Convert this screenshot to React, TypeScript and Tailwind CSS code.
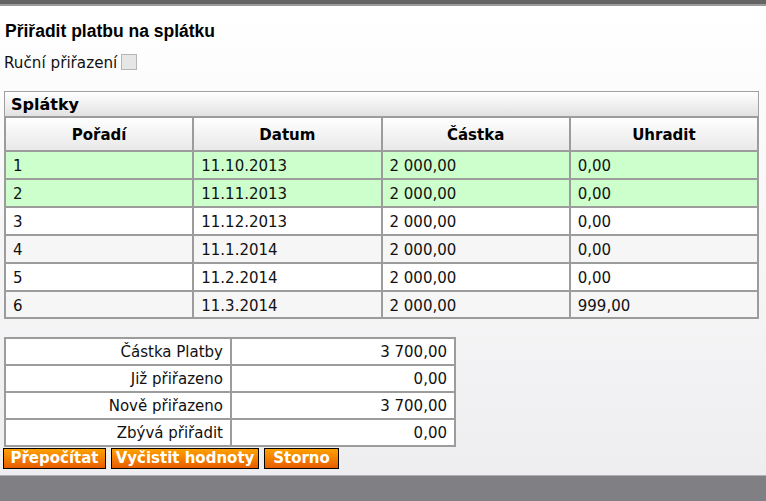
import React from "react";

const rows = [
  { p: "1", d: "11.10.2013", c: "2 000,00", u: "0,00", bg: "bg-[#ccffcc]", h: "h-[28px]" },
  { p: "2", d: "11.11.2013", c: "2 000,00", u: "0,00", bg: "bg-[#ccffcc]", h: "h-[28px]" },
  { p: "3", d: "11.12.2013", c: "2 000,00", u: "0,00", bg: "bg-white", h: "h-[28px]" },
  { p: "4", d: "11.1.2014", c: "2 000,00", u: "0,00", bg: "bg-[#f6f6f6]", h: "h-[27px]" },
  { p: "5", d: "11.2.2014", c: "2 000,00", u: "0,00", bg: "bg-white", h: "h-[28px]" },
  { p: "6", d: "11.3.2014", c: "2 000,00", u: "999,00", bg: "bg-[#f6f6f6]", h: "h-[26px]" },
];

const summary = [
  ["Částka Platby", "3 700,00"],
  ["Již přiřazeno", "0,00"],
  ["Nově přiřazeno", "3 700,00"],
  ["Zbývá přiřadit", "0,00"],
];

export default function App() {
  const verdana = { fontFamily: '"DejaVu Sans", Verdana, sans-serif' };
  return (
    <div className="flex min-h-[501px] flex-col" style={verdana}>
      <div className="h-[4px] bg-[#646464]" />
      <div className="h-[2px] bg-[#9b9b9b]" />
      <div className="flex-1 bg-gradient-to-b from-white to-[#eeeef0] px-[4px] pb-[6px] text-[#111]">
        <h1
          className="pl-[1px] pt-[15px] text-[17.5px] font-bold leading-[20px] text-black"
          style={{ fontFamily: '"Liberation Sans", Arial, sans-serif' }}
        >
          Přiřadit platbu na splátku
        </h1>
        <div className="mt-[13px] flex items-center text-[15.2px] leading-[18px]">
          <span>Ruční přiřazení</span>
          <span className="ml-[4px] -mt-[3px] inline-block h-[16px] w-[16px] border border-[#b5b5b5] bg-[#e6e6e6]" />
        </div>
        <div className="mt-[19px] w-[755px]">
          <div className="h-[25px] border border-b-0 border-[#a0a0a0] bg-gradient-to-b from-white to-[#e2e2e2] pl-[6px] pt-[1px] text-[16px] font-bold leading-[24px] text-black">
            Splátky
          </div>
          <table className="w-[755px] table-fixed border-collapse text-[15px]">
            <thead>
              <tr className="h-[34px] bg-gradient-to-b from-white to-[#e8e8e8]">
                {["Pořadí", "Datum", "Částka", "Uhradit"].map((h) => (
                  <th key={h} className="border-2 border-[#9c9c9c] pt-[2px] font-bold text-black">
                    {h}
                  </th>
                ))}
              </tr>
            </thead>
            <tbody>
              {rows.map((r) => (
                <tr key={r.p} className={`${r.h} ${r.bg}`}>
                  <td className="border-2 border-[#9c9c9c] pl-[7px] pt-[3px]">{r.p}</td>
                  <td className="border-2 border-[#9c9c9c] pl-[7px] pt-[3px]">{r.d}</td>
                  <td className="border-2 border-[#9c9c9c] pl-[7px] pt-[3px]">{r.c}</td>
                  <td className="border-2 border-[#9c9c9c] pl-[7px] pt-[3px]">{r.u}</td>
                </tr>
              ))}
            </tbody>
          </table>
        </div>
        <table className="mt-[18px] w-[452px] table-fixed border-collapse bg-white text-[15px]">
          <tbody>
            {summary.map(([l, v]) => (
              <tr key={l} className="h-[27px]">
                <td className="w-[226px] border-2 border-[#9c9c9c] pr-[7px] pt-[2px] text-right">{l}</td>
                <td className="border-2 border-[#9c9c9c] pr-[7px] pt-[2px] text-right">{v}</td>
              </tr>
            ))}
          </tbody>
        </table>
        <div className="mt-[1px] flex gap-[6px]">
          {[
            ["Přepočítat", "w-[103px]"],
            ["Vyčistit hodnoty", "w-[148px]"],
            ["Storno", "w-[75px]"],
          ].map(([t, w]) => (
            <button
              key={t}
              className={`${w} -ml-[1px] h-[21px] border border-black bg-gradient-to-b from-[#ffa000] to-[#e65c00] text-[15px] font-bold leading-[19px] text-white`}
              style={verdana}
            >
              {t}
            </button>
          ))}
        </div>
      </div>
      <div className="h-[1px] bg-[#b0b0b4]" />
      <div className="h-[26px] bg-[#808084]" />
    </div>
  );
}
